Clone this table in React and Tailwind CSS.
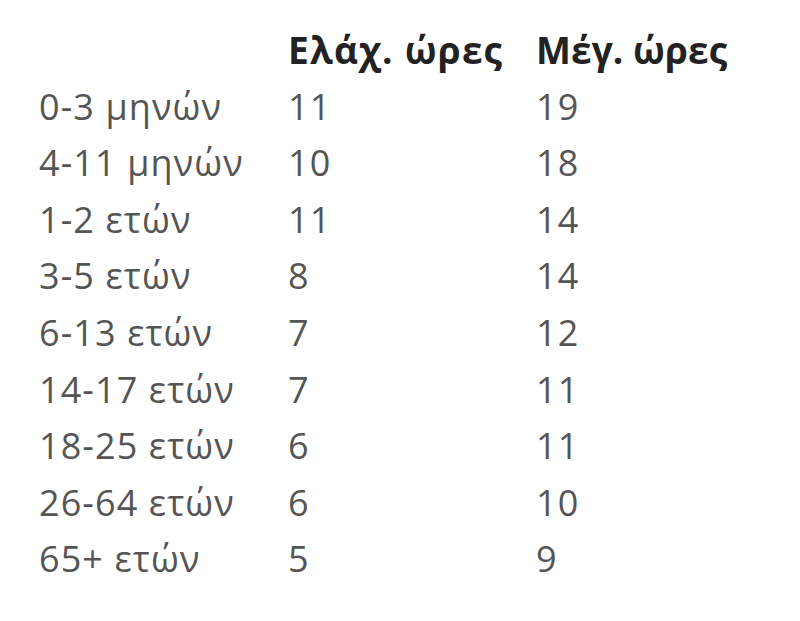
import React from 'react';

const filas = [
  ['0-3 μηνών', '11', '19'],
  ['4-11 μηνών', '10', '18'],
  ['1-2 ετών', '11', '14'],
  ['3-5 ετών', '8', '14'],
  ['6-13 ετών', '7', '12'],
  ['14-17 ετών', '7', '11'],
  ['18-25 ετών', '6', '11'],
  ['26-64 ετών', '6', '10'],
  ['65+ ετών', '5', '9'],
];

const App = () => {
  return (
    <div
      className="w-[800px] h-[621px] bg-white pl-[39px] pt-[22px]"
      style={{ fontFamily: '"Open Sans", "Noto Sans", sans-serif' }}
    >
      <div className="grid grid-cols-[249px_248px_auto] text-[36px] leading-[56.6px] tracking-[1.1px] text-[#555]">
        {/* CABECERA */}
        <div />
        <div className="font-bold text-[37px] text-[#222] tracking-[1.2px]">Ελάχ. ώρες</div>
        <div className="font-bold text-[37px] text-[#222] tracking-[0.1px]">Μέγ. ώρες</div>

        {/* FILAS */}
        {filas.map(([edad, min, max]) => (
          <React.Fragment key={edad}>
            <div>{edad}</div>
            <div>{min}</div>
            <div>{max}</div>
          </React.Fragment>
        ))}
      </div>
    </div>
  );
};

export default App;
